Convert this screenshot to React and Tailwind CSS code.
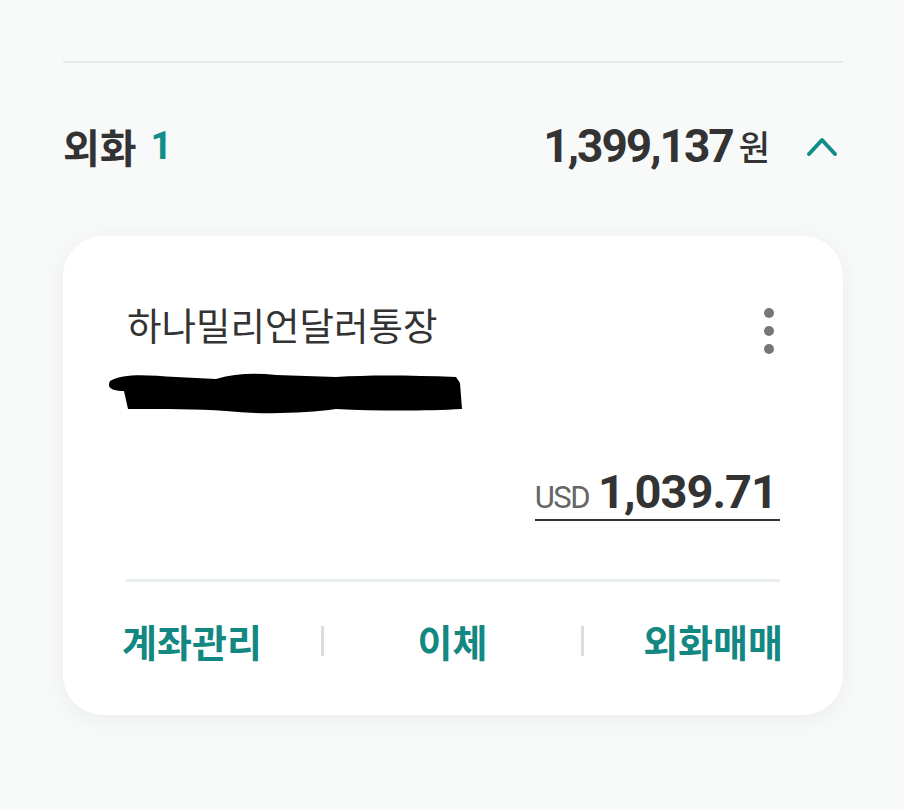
import { useState } from "react";

const kr = { fontFamily: '"Noto Sans CJK KR", "Noto Sans", sans-serif' };
const num = { fontFamily: 'Roboto, "Noto Sans CJK KR", sans-serif' };

function Redacted() {
  return (
    <svg width="360" height="46" viewBox="0 0 360 46" className="block">
      <path
        d="M4 12 C 18 4, 40 6, 70 8 L 110 10 C 130 4, 150 4, 170 6 L 230 8 C 260 6, 300 6, 350 8 L 354 14 L 356 40 C 320 42, 270 42, 230 40 C 200 44, 160 46, 120 42 C 90 40, 60 40, 22 40 L 18 22 C 8 22, 0 20, 4 12 Z"
        fill="#000"
      />
    </svg>
  );
}

export default function App() {
  const [open, setOpen] = useState(true);
  const actions = ["계좌관리", "이체", "외화매매"];

  return (
    <div className="min-h-[810px] w-full bg-[#f8fafa] pl-[63px] pr-[61px]">
      <div className="pt-[61px]">
        <div className="h-[2px] bg-[#e4eded]" />
      </div>

      <div className="flex h-[166px] items-center justify-between">
        <div className="flex items-center gap-[14px] font-bold leading-none">
          <span style={kr} className="text-[40px] text-[#333]">외화</span>
          <span style={num} className="text-[38px] text-[#138d88]">1</span>
        </div>
        <div className="flex items-center">
          <span style={num} className="text-[46px] font-bold leading-none tracking-[-2px] text-[#333]">
            1,399,137
          </span>
          <span style={kr} className="ml-[6px] text-[34px] font-medium leading-none text-[#333]">
            원
          </span>
          <button type="button" onClick={() => setOpen(!open)} className="ml-[36px] mr-[5px]">
            <svg width="32" height="22" viewBox="0 0 32 22" fill="none">
              <path d="M3 19 L16 5 L29 19" stroke="#138d88" strokeWidth="4" strokeLinecap="round" strokeLinejoin="round" />
            </svg>
          </button>
        </div>
      </div>

      {open && (
        <div className="mt-[7px] rounded-[40px] bg-white px-[63px] pt-[64px] pb-[55px] shadow-[0_4px_24px_rgba(0,0,0,0.06)]">
          <div className="flex items-start justify-between">
            <div style={kr} className="pl-[1px] text-[37.5px] leading-[48px] text-[#333]">
              하나밀리언달러통장
            </div>
            <div className="mt-[8px] mr-[6px] flex flex-col gap-[8px]">
              <span className="h-[10px] w-[10px] rounded-full bg-[#777]" />
              <span className="h-[10px] w-[10px] rounded-full bg-[#777]" />
              <span className="h-[10px] w-[10px] rounded-full bg-[#777]" />
            </div>
          </div>

          <div className="-ml-[20px] mt-[15px]">
            <Redacted />
          </div>

          <div className="mt-[53px] flex justify-end">
            <div className="flex items-baseline gap-[9px] border-b-2 border-[#333] pb-[4px] pr-[3px]">
              <span style={num} className="text-[31px] leading-none tracking-[-1.5px] text-[#666]">USD</span>
              <span style={num} className="text-[47px] font-bold leading-none tracking-[-1px] text-[#333]">
                1,039.71
              </span>
            </div>
          </div>

          <div className="mt-[58px] h-[3px] bg-[#e8eeee]" />

          <div style={kr} className="mt-[40px] flex items-center text-[38px] font-bold leading-none text-[#138782]">
            <button type="button" className="-ml-[4px]">{actions[0]}</button>
            <span className="ml-[59px] h-[30px] w-[3px] bg-[#dddddd]" />
            <div className="flex flex-1 justify-center">
              <button type="button">{actions[1]}</button>
            </div>
            <span className="mr-[59px] h-[30px] w-[3px] bg-[#dddddd]" />
            <button type="button" className="-mr-[3px]">{actions[2]}</button>
          </div>
        </div>
      )}
    </div>
  );
}
